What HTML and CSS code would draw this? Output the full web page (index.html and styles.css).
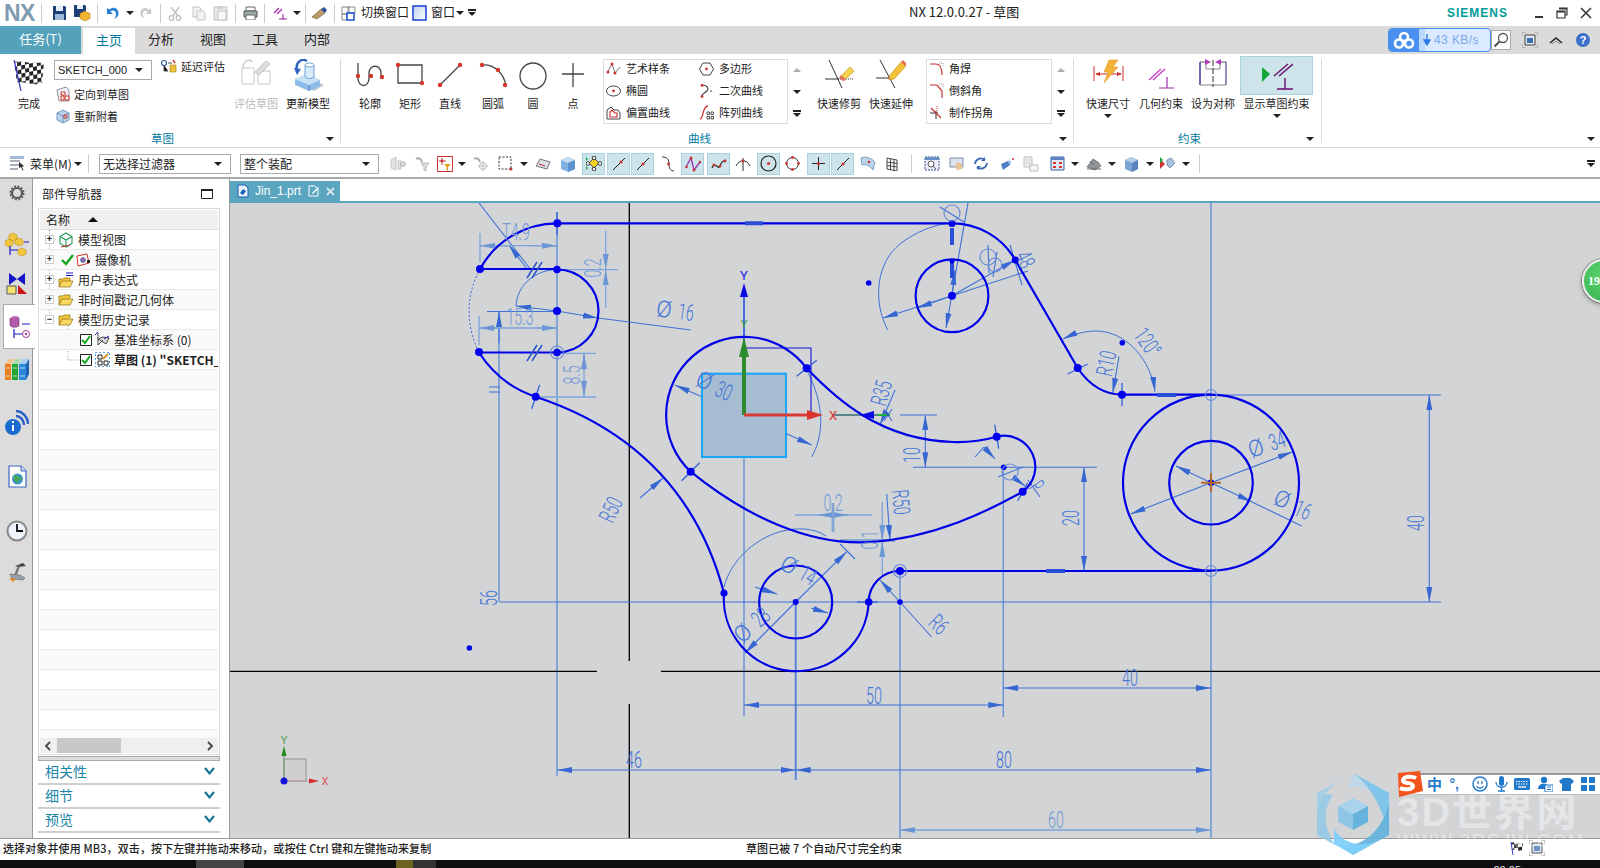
FILE: index.html
```html
<!DOCTYPE html>
<html lang="zh">
<head>
<meta charset="utf-8">
<title>NX 12.0.0.27 - 草图</title>
<link rel="stylesheet" href="styles.css">
</head>
<body>
<header class="titlebar">
  <div class="qat">
    <span class="nx">NX</span><i class="sep"></i>
    <svg width="15" height="16" viewBox="0 0 15 16"><path d="M1 1h12l1 1v13H1z" fill="#1d3f78"/><path d="M4 1h7v5H4z" fill="#e8eef6"/><path d="M3 9h9v6H3z" fill="#9db7d8"/></svg>
    <svg width="17" height="16" viewBox="0 0 17 16"><path d="M0 0h11l1 1v11H0z" fill="#1d3f78"/><path d="M3 0h6v4H3z" fill="#e8eef6"/><path d="M11 6l5 2.500v5L11 16l-5-2.500v-5z" fill="#f2b632" stroke="#b77d12" stroke-width=".6"/></svg>
    <i class="sep"></i>
    <svg width="14" height="14" viewBox="0 0 14 14"><path d="M2 2v6h6L5.500 5.500C8 3.500 11.500 5 11 9c-.2 1.500-1 3-2 4 3-1 5-3.500 4.500-6.500C13 2 8 0 4.500 3.500z" fill="#2a7fd5"/></svg>
    <i class="caret"></i>
    <svg width="13" height="14" viewBox="0 0 14 14"><path d="M12 2v6H6l2.500-2.500C6 3.500 2.500 5 3 9c.2 1.500 1 3 2 4-3-1-5-3.500-4.500-6.500C1 2 6 0 9.500 3.500z" fill="#c9c9c9"/></svg>
    <i class="sep"></i>
    <svg width="14" height="15" viewBox="0 0 14 15"><path d="M11 1L5 10M3 1l7 9" stroke="#c4c4c4" stroke-width="1.500" fill="none"/><circle cx="3.500" cy="12" r="2.300" fill="none" stroke="#bdbdbd" stroke-width="1.200"/><circle cx="10.500" cy="12" r="2.300" fill="none" stroke="#bdbdbd" stroke-width="1.200"/></svg>
    <svg width="14" height="15" viewBox="0 0 14 15"><path d="M1 1h6l2 2v8H1z" fill="#f2f2f2" stroke="#c4c4c4"/><path d="M5 5h6l2 2v7H5z" fill="#f2f2f2" stroke="#c4c4c4"/></svg>
    <svg width="15" height="16" viewBox="0 0 15 16"><path d="M1 2h13v13H1z" fill="#e6e6e6" stroke="#c4c4c4"/><path d="M5 1h5v3H5z" fill="#ccc"/><path d="M5 6h8v9H5z" fill="#f7f7f7" stroke="#c4c4c4"/></svg>
    <i class="sep"></i>
    <svg width="15" height="14" viewBox="0 0 15 14"><path d="M3 1h9v4H3z" fill="#fff" stroke="#666"/><path d="M1 5h13v6H1z" fill="#9aa" stroke="#555"/><path d="M3 9h9v5H3z" fill="#fff" stroke="#666"/></svg>
    <i class="sep"></i>
    <svg width="14" height="14" viewBox="0 0 14 14"><path d="M1 7l5-5M4 8l5-5" stroke="#b025b5" stroke-width="1.200"/><path d="M6 13h8M10 13V8" stroke="#8c1d94"/></svg>
    <i class="caret"></i>
    <i class="sep"></i>
    <svg width="16" height="14" viewBox="0 0 16 14"><path d="M0 11l9-8 4 4-8 6z" fill="#b99a66" stroke="#6b5630" stroke-width=".6"/><path d="M9 3l3-2 3 3-2 3z" fill="#2a4f9a"/></svg>
    <i class="sep"></i>
    <svg width="15" height="15" viewBox="0 0 15 15"><path d="M1 1h7v7H1zM7 1h7v6H7zM1 8h5v6H1z" fill="#fff" stroke="#888"/><path d="M6 7h7v7H6z" fill="#fff" stroke="#1a4fd0" stroke-width="1.500"/></svg>
    <span class="qat-text">切换窗口</span>
    <svg width="15" height="16" viewBox="0 0 15 16"><defs><linearGradient id="winfill" x1="0" y1="0" x2="1" y2="1"><stop offset="0" stop-color="#bcd3ea"/><stop offset="1" stop-color="#fff"/></linearGradient></defs><path d="M1 1h13v14H1z" fill="url(#winfill)" stroke="#1a3fd8" stroke-width="1.500"/></svg>
    <span class="qat-text">窗口</span>
    <i class="caret"></i>
    <i class="caret caret-bar"></i>
  </div>
  <div class="app-title">NX 12.0.0.27 - 草图</div>
  <div class="siemens">SIEMENS</div>
  <div class="winbtns">
    <svg width="12" height="12" viewBox="0 0 12 12"><path d="M3 10h8" stroke="#333" stroke-width="2"/></svg>
    <svg width="12" height="12" viewBox="0 0 12 12"><path d="M3 1h8v7H9M1 4h8v7H1z" fill="none" stroke="#333" stroke-width="1.200"/><path d="M3 1h8v1.500H3zM1 4h8v1.500H1z" fill="#333"/></svg>
    <svg width="12" height="12" viewBox="0 0 12 12"><path d="M1 1l10 10M11 1L1 11" stroke="#333" stroke-width="1.500"/></svg>
  </div>
</header>

<nav class="tabs">
  <div class="tab-task">任务(T)</div>
  <div class="tab tab-active">主页</div>
  <div class="tab tab-first">分析</div>
  <div class="tab">视图</div>
  <div class="tab">工具</div>
  <div class="tab">内部</div>
  <div class="tabs-right">
    <div class="speed">
      <span class="speed-logo"><svg width="22" height="18" viewBox="0 0 22 18"><circle cx="11" cy="6" r="4" fill="none" stroke="#fff" stroke-width="2.600"/><circle cx="6" cy="12.500" r="4" fill="none" stroke="#fff" stroke-width="2.600"/><circle cx="16" cy="12.500" r="4" fill="none" stroke="#fff" stroke-width="2.600"/></svg></span>
      <span class="speed-text"><svg width="8" height="12" viewBox="0 0 8 12"><path d="M4 0v9M1 6l3 5 3-5z" fill="#2a7be8" stroke="#2a7be8" stroke-width="1.400"/></svg>43 KB/s</span>
    </div>
    <div class="search-btn"><svg width="16" height="16" viewBox="0 0 16 16"><circle cx="10" cy="6" r="4.500" fill="#fff" stroke="#555" stroke-width="1.300"/><path d="M6.500 9.500L1.500 14.500" stroke="#555" stroke-width="2.200"/></svg></div>
    <svg class="tr-win" width="16" height="16" viewBox="0 0 16 16"><path d="M0 4V0h4M12 0h4v4M16 12v4h-4M4 16H0v-4" fill="none" stroke="#999"/><path d="M3 3h10v10H3z" fill="#dfe8f2" stroke="#444"/><path d="M5 6h6v5H5z" fill="#3d6fb0"/></svg>
    <svg class="tr-chev" width="14" height="9" viewBox="0 0 14 9"><path d="M1 7l6-5 6 5" fill="none" stroke="#222" stroke-width="1.500"/><path d="M3 8l4-3 4 3" fill="none" stroke="#888"/></svg>
    <span class="help">?</span>
  </div>
</nav>

<section class="ribbon">
  <div class="group group-sketch">
    <div class="group-body">
      <div class="tool tool-finish">
        <div class="tool-icon">
          <svg width="32" height="32" viewBox="0 0 32 32"><defs><pattern id="chk" width="8" height="8" patternUnits="userSpaceOnUse" patternTransform="rotate(-12) skewX(-10)"><rect width="8" height="8" fill="#fff"/><rect width="4" height="4" fill="#222"/><rect x="4" y="4" width="4" height="4" fill="#222"/></pattern></defs><path d="M1 3c8-3 13 3 30 0l-2 21c-10 4-19-3-25 0z" fill="url(#chk)"/><path d="M1 1l7 31" stroke="#3a3ac8" stroke-width="1.200"/></svg>
        </div>
        <span class="tool-label">完成</span>
      </div>
      <div class="sketch-stack">
        <div class="sketch-top">
          <div class="combo combo-sketch"><span>SKETCH_000</span><i class="caret"></i></div>
          <div class="mini-row">
            <svg width="16" height="14" viewBox="0 0 16 14"><circle cx="3" cy="4" r="2.500" fill="none" stroke="#2b5aa0" stroke-width="1.200"/><path d="M3 6v6h4M7 4h4" stroke="#555"/><path d="M9 6h6v7H9z" fill="#f0c040" stroke="#a57c10" stroke-width=".6"/><path d="M12 1l2 3" stroke="#c33" stroke-width="1.400"/></svg>
            <span>延迟评估</span>
          </div>
        </div>
        <div class="mini-row mini-orient">
          <svg width="16" height="16" viewBox="0 0 16 16"><path d="M2 4l9-3 3 3v11H4z" fill="#eef" stroke="#777" stroke-width=".8"/><path d="M6 6h4v3H6zM6 10h3v4H6zM10 10h4v4h-4z" fill="#fff" stroke="#c32" stroke-width="1"/></svg>
          <span>定向到草图</span>
        </div>
        <div class="mini-row mini-reattach">
          <svg width="16" height="16" viewBox="0 0 16 16"><path d="M8 2l6 3v7l-6 3-6-3V5z" fill="#bcd3ea" stroke="#5e83b8" stroke-width=".8"/><path d="M2 5l6 3 6-3M8 8v7" stroke="#5e83b8" fill="none" stroke-width=".8"/><path d="M9 7h3v3H9z" fill="none" stroke="#c32"/></svg>
          <span>重新附着</span>
        </div>
      </div>
      <div class="tool tool-eval">
        <div class="tool-icon">
          <svg width="31" height="26" viewBox="0 0 31 26"><path d="M1 9h12v16H1zM17 12h12v13H17z" fill="none" stroke="#c8c8c8"/><path d="M2 9c0-5 3-8 7-8l2 2" fill="none" stroke="#c8c8c8" stroke-width="1.500"/><path d="M14 13L25 2l4 3-11 11z" fill="#ddd" stroke="#c4c4c4"/></svg>
        </div>
        <span class="tool-label label-off">评估草图</span>
      </div>
      <div class="tool tool-eval tool-update">
        <div class="tool-icon">
          <svg width="31" height="32" viewBox="0 0 31 32"><path d="M10 24l8-4 13 6-10 6z" fill="#b9c6d4"/><path d="M2 20l12-5 13 6v6l-11 5-14-6z" fill="#8cbbea"/><path d="M2 20l14 6 11-5-13-6z" fill="#c9e2f8"/><path d="M16 26v6" stroke="#4f86c4"/><path d="M12 6h9v12c-2 2-7 2-9 0z" fill="#d8ebfa" stroke="#6da1d6"/><ellipse cx="16.500" cy="6" rx="4.500" ry="2" fill="#fff" stroke="#6da1d6"/><path d="M4 11C2 3 9-1 14 2" fill="none" stroke="#2c66c5" stroke-width="2.400"/><path d="M1 9l3 7 4-6z" fill="#2c66c5"/></svg>
        </div>
        <span class="tool-label">更新模型</span>
      </div>
    </div>
    <div class="group-foot foot-sketch"><span>草图</span><i class="caret"></i></div>
  </div>

  <div class="group group-curve">
    <div class="group-body">
      <div class="tool tool-40">
        <div class="tool-icon"><svg width="30" height="26" viewBox="0 0 30 26" class="line-ico"><path d="M3 1v15c0 10 11 10 11 0V11c0-9 12-9 12 0v6"/><circle cx="3" cy="14" r="2.200"/><circle cx="16" cy="14" r="2.200"/><circle cx="27" cy="15" r="2.200"/></svg></div>
        <span class="tool-label">轮廓</span>
      </div>
      <div class="tool tool-40">
        <div class="tool-icon"><svg width="30" height="24" viewBox="0 0 30 24" class="line-ico"><path d="M3 3h24v18H3z"/><circle cx="3" cy="3" r="2.200"/><circle cx="27" cy="21" r="2.200"/></svg></div>
        <span class="tool-label">矩形</span>
      </div>
      <div class="tool tool-40">
        <div class="tool-icon"><svg width="26" height="26" viewBox="0 0 26 26" class="line-ico"><path d="M3 23L23 3"/><circle cx="3" cy="23" r="2.200"/><circle cx="23" cy="3" r="2.200"/></svg></div>
        <span class="tool-label">直线</span>
      </div>
      <div class="tool tool-40 tool-arc">
        <div class="tool-icon"><svg width="29" height="26" viewBox="0 0 29 26" class="line-ico"><path d="M3 3c12-1 22 8 24 21"/><circle cx="3" cy="3" r="2.200"/><circle cx="19" cy="8" r="2.200"/><circle cx="26" cy="23" r="2.200"/></svg></div>
        <span class="tool-label">圆弧</span>
      </div>
      <div class="tool tool-40">
        <div class="tool-icon"><svg width="28" height="28" viewBox="0 0 28 28" class="line-ico"><circle class="hollow" cx="14" cy="14" r="13"/></svg></div>
        <span class="tool-label">圆</span>
      </div>
      <div class="tool tool-40">
        <div class="tool-icon"><svg width="24" height="26" viewBox="0 0 24 26" class="line-ico"><path d="M12 1v24M1 12h22"/></svg></div>
        <span class="tool-label">点</span>
      </div>
      <div class="gallery gallery-curve">
        <div class="g-item"><svg width="15" height="14" viewBox="0 0 15 14"><path d="M1 11L6 2l3 9 5-6" fill="none" stroke="#777"/><circle cx="6" cy="2" r="1.500" fill="#c33"/><circle cx="9" cy="11" r="1.500" fill="#c33"/><circle cx="2" cy="10" r="1.500" fill="#c33"/></svg><span>艺术样条</span></div>
        <div class="g-item"><svg width="15" height="14" viewBox="0 0 15 14"><path d="M4 1h7l3.500 6-3.500 6H4L.5 7z" fill="none" stroke="#444"/><circle cx="7.500" cy="7" r="1.400" fill="#c33"/></svg><span>多边形</span></div>
        <div class="g-item"><svg width="15" height="12" viewBox="0 0 15 12"><ellipse cx="7.500" cy="6" rx="7" ry="5" fill="none" stroke="#444"/><circle cx="7.500" cy="6" r="1.400" fill="#c33"/></svg><span>椭圆</span></div>
        <div class="g-item"><svg width="15" height="14" viewBox="0 0 15 14"><path d="M3 1c6 0 7 4 5 6s-5 3-5 5" fill="none" stroke="#444" stroke-width="1.200"/><circle cx="3" cy="1.500" r="1.400" fill="#c33"/><circle cx="3" cy="12.500" r="1.400" fill="#c33"/><circle cx="12" cy="7" r="1" fill="#888"/></svg><span>二次曲线</span></div>
        <div class="g-item"><svg width="15" height="14" viewBox="0 0 15 14"><path d="M1 13V4l4-3 3 3h4l2 3v6z" fill="none" stroke="#444"/><path d="M4 11V6l2-2 3 3h2v4z" fill="none" stroke="#c33" stroke-width="1.200"/></svg><span>偏置曲线</span></div>
        <div class="g-item"><svg width="15" height="15" viewBox="0 0 15 15"><path d="M1 14c4 0 2-13 8-13" fill="none" stroke="#c33" stroke-width="1.300"/><path d="M8 7h2.500v2.500H8zM12 7h2.500v2.500H12zM8 11.500h2.500V14H8zM12 11.500h2.500V14H12z" fill="none" stroke="#555"/></svg><span>阵列曲线</span></div>
      </div>
      <div class="g-arrows"><i class="caret caret-up"></i><i class="caret"></i><i class="caret caret-bar"></i></div>
      <div class="tool tool-52 tool-trim">
        <div class="tool-icon"><svg width="30" height="30" viewBox="0 0 30 30"><path d="M5 1l13 28M1 20h14" stroke="#333" fill="none"/><path d="M14 20h16" stroke="#333" stroke-dasharray="1 1" fill="none"/><path d="M17 17L26 8l4 4-8 8z" fill="#f4d24c" stroke="#b88a1c" stroke-width=".6"/><path d="M15 19l2-3 5 5-3 1z" fill="#e2705a"/></svg></div>
        <span class="tool-label">快速修剪</span>
      </div>
      <div class="tool tool-52">
        <div class="tool-icon"><svg width="30" height="30" viewBox="0 0 30 30"><path d="M4 1l15 28" stroke="#333" fill="none"/><path d="M0 19h14" stroke="#333" fill="none"/><path d="M12 19h5" stroke="#c33" stroke-width="1.200"/><path d="M14 16L25 3l5 4-12 13-5 1z" fill="#f4c236" stroke="#b88a1c" stroke-width=".6"/><path d="M25 3l2-2 4 4-2 2z" fill="#e2705a"/></svg></div>
        <span class="tool-label">快速延伸</span>
      </div>
      <div class="gallery gallery-corner">
        <div class="g-item"><svg width="15" height="14" viewBox="0 0 15 14"><path d="M1 2h6c4 0 6 3 6 11" fill="none" stroke="#c33" stroke-width="1.200"/><path d="M10 1h4v4" fill="none" stroke="#999" stroke-dasharray="1 1"/></svg><span>角焊</span></div>
        <div class="g-item"><svg width="15" height="16" viewBox="0 0 15 16"><path d="M1 2h7l5 6v7" fill="none" stroke="#c33" stroke-width="1.200"/><path d="M10 1h4v4" fill="none" stroke="#999" stroke-dasharray="1 1"/></svg><span>倒斜角</span></div>
        <div class="g-item"><svg width="15" height="15" viewBox="0 0 15 15"><path d="M1 8h8M7 14V6" stroke="#333" fill="none"/><path d="M2 3l10 10" stroke="#c33" stroke-width="1.200"/><path d="M8 1v6" stroke="#c33" stroke-dasharray="1 1"/></svg><span>制作拐角</span></div>
      </div>
      <div class="g-arrows"><i class="caret caret-up"></i><i class="caret"></i><i class="caret caret-bar"></i></div>
    </div>
    <div class="group-foot foot-curve"><span>曲线</span><i class="caret"></i></div>
  </div>

  <div class="group group-constraint">
    <div class="group-body">
      <div class="tool tool-50">
        <div class="tool-icon"><svg width="31" height="24" viewBox="0 0 31 24"><path d="M1 7v15M30 7v15M3 15h25" stroke="#c8322b" fill="none"/><path d="M2 15l5-2v4zM29 15l-5-2v4z" fill="#c8322b"/><path d="M16 1h9l-5 7h5L11 24l4-11h-4z" fill="#f3b137" stroke="#e28a1a" stroke-width=".5"/></svg></div>
        <span class="tool-label">快速尺寸</span>
        <i class="caret"></i>
      </div>
      <div class="tool tool-50 tool-geo">
        <div class="tool-icon icon-end"><svg width="27" height="21" viewBox="0 0 27 21"><path d="M1 12L13 1M5 12l12-11" stroke="#c23fc8" stroke-width="1.300" fill="none"/><path d="M11 20h15M19 20V9" stroke="#a52fb0" stroke-width="1.200" fill="none"/></svg></div>
        <span class="tool-label">几何约束</span>
      </div>
      <div class="tool tool-50 tool-geo2">
        <div class="tool-icon"><svg width="28" height="28" viewBox="0 0 28 28"><path d="M1 3v23" stroke="#3a3a9a" stroke-width="1.500" fill="none"/><path d="M27 3v23" stroke="#6a6aa8" stroke-width="1.500" fill="none"/><path d="M1 26h26" stroke="#888" fill="none"/><path d="M1 3h6M27 3h-6" stroke="#555" fill="none"/><path d="M7 3v7h14V3" stroke="#888" fill="none"/><path d="M14 1v27" stroke="#333" stroke-dasharray="6 2" fill="none"/><path d="M12 3L6 0v6zM16 3l6-3v6z" fill="#b33bbf"/></svg></div>
        <span class="tool-label">设为对称</span>
      </div>
      <div class="tool tool-show">
        <div class="tool-icon icon-on"><svg width="32" height="30" viewBox="0 0 32 30"><path d="M2 8l8 7-8 8z" fill="#10a83a" transform="translate(-1 -1)"/><path d="M13 16L27 4M18 16L32 4" stroke="#6b0d6e" stroke-width="1.400" fill="none"/><path d="M16 29h16M24 29V18" stroke="#6b0d6e" stroke-width="1.400" fill="none"/></svg></div>
        <span class="tool-label">显示草图约束</span>
        <i class="caret"></i>
      </div>
    </div>
    <div class="group-foot foot-constraint"><span>约束</span><i class="caret"></i></div>
  </div>

  <div class="group group-rest">
    <div class="group-body"></div>
    <div class="group-foot foot-rest"><i class="caret"></i></div>
  </div>
</section>

<section class="selbar">
  <svg class="menu-ico" width="16" height="15" viewBox="0 0 16 15"><path d="M0 1h13M0 5h10M0 9h10M0 13h8" stroke="#567" fill="none"/><path d="M0 0h14v3H0z" fill="#a4bbd6"/><path d="M9 6l5 4-2 1 1.500 3-1 .5L11 11l-2 1z" fill="#333"/></svg>
  <span class="menu-text">菜单(M)</span>
  <i class="caret menu-caret"></i>
  <i class="sep sel-sep"></i>
  <div class="combo combo-filter"><span>无选择过滤器</span><i class="caret"></i></div>
  <div class="combo combo-scope"><span>整个装配</span><i class="caret"></i></div>
  <div class="sel-icons">
    <svg width="16" height="16" viewBox="0 0 16 16"><path d="M1 4l5-3v13l-5-2zM8 5h3v8H8z" fill="#e2e2e2" stroke="#c4c4c4"/><circle cx="13" cy="8" r="2.500" fill="#ddd" stroke="#bbb"/></svg>
    <svg width="15" height="16" viewBox="0 0 15 16"><path d="M1 3c3-2 5 0 6 3" fill="none" stroke="#aaa" stroke-width="2"/><path d="M6 7h8l-3 4v4l-2-1v-3z" fill="#ddd" stroke="#bbb"/></svg>
    <svg width="16" height="16" viewBox="0 0 16 16"><path d="M.5.500h15v15H.5z" fill="#fff" stroke="#c33"/><path d="M5 2v7M2 5h7" stroke="#c33"/><circle cx="5" cy="5" r="1.400" fill="#c33"/><path d="M7 8h7l-3 3v4l-1.500-1v-3z" fill="#e8a020"/></svg>
    <i class="caret"></i>
    <svg width="15" height="16" viewBox="0 0 15 16"><path d="M1 3c3-2 5 0 6 3" fill="none" stroke="#aaa" stroke-width="2"/><circle cx="10" cy="10" r="3.500" fill="none" stroke="#bbb"/><path d="M10 5v10M5 10h10" stroke="#bbb"/></svg>
    <svg width="15" height="15" viewBox="0 0 15 15"><path d="M1 1h12v12H1z" fill="none" stroke="#333" stroke-dasharray="2 1.500"/><circle cx="13" cy="13" r="1.500" fill="#c33"/></svg>
    <i class="caret"></i>
    <svg width="16" height="14" viewBox="0 0 16 14"><path d="M1 9l4-7 10 3-3 7z" fill="#d9dfe6" stroke="#777"/><path d="M4 7l6 2" stroke="#c33"/></svg>
    <svg width="16" height="16" viewBox="0 0 16 16"><path d="M1 4l7-3 7 3v9l-7 3-7-3z" fill="#7fb2e3"/><path d="M1 4l7 3 7-3-7-3z" fill="#c6dcf2"/><path d="M8 7v9l7-3V4z" fill="#5b93cf"/></svg>
    <b class="hl"><svg width="16" height="15" viewBox="0 0 16 15"><path d="M8 2l5 5-5 5-5-5z" fill="#f5d020" stroke="#555"/><circle cx="8" cy="2" r="1.800" fill="#fff" stroke="#333"/><circle cx="8" cy="13" r="1.800" fill="#fff" stroke="#333"/><circle cx="2" cy="7.500" r="1.800" fill="#fff" stroke="#333"/><circle cx="14" cy="7.500" r="1.800" fill="#fff" stroke="#333"/><path d="M0 1l2 2-2 2zM0 10l2 2-2 2z" fill="#10a83a"/></svg></b>
    <b class="hl"><svg width="14" height="14" viewBox="0 0 14 14"><path d="M1 13L13 1" stroke="#222"/><circle cx="9" cy="5" r="1.600" fill="#c33"/></svg></b>
    <b class="hl"><svg width="14" height="14" viewBox="0 0 14 14"><path d="M1 13L13 1" stroke="#222"/><circle cx="7" cy="7" r="1.600" fill="#c33"/></svg></b>
    <svg width="14" height="16" viewBox="0 0 14 16"><path d="M1 1c5 0 7 2 7 7s2 7 5 7" fill="none" stroke="#333"/><circle cx="7.500" cy="8" r="1.400" fill="#c33"/></svg>
    <b class="hl"><svg width="16" height="16" viewBox="0 0 16 16"><path d="M1 11L6 2l3 12 6-8" fill="none" stroke="#a02cb0" stroke-width="1.300"/><circle cx="6" cy="2" r="1.500" fill="#c33"/><circle cx="9" cy="14" r="1.500" fill="#c33"/><circle cx="15" cy="6" r="1.300" fill="#c33"/><circle cx="1.500" cy="11" r="1.300" fill="#c33"/></svg></b>
    <b class="hl"><svg width="16" height="12" viewBox="0 0 16 12"><path d="M1 10c3-8 6 3 8-2s3-5 6-6" fill="none" stroke="#222" stroke-width="1.200"/><circle cx="3" cy="7" r="1.500" fill="#c33"/><circle cx="9" cy="8" r="1.500" fill="#c33"/><circle cx="14" cy="3" r="1.500" fill="#c33"/></svg></b>
    <svg width="16" height="15" viewBox="0 0 16 15"><path d="M1 10c3-7 11-7 14 0M8 2v13" fill="none" stroke="#333"/><circle cx="8" cy="5" r="1.400" fill="#c33"/></svg>
    <b class="hl"><svg width="17" height="17" viewBox="0 0 17 17"><circle cx="8.500" cy="8.500" r="7.500" fill="none" stroke="#222" stroke-width="1.200"/><circle cx="8.500" cy="8.500" r="1.600" fill="#c33"/></svg></b>
    <svg width="15" height="15" viewBox="0 0 15 15"><circle cx="7.500" cy="7.500" r="6" fill="none" stroke="#333"/><circle cx="7.500" cy="1.500" r="1.400" fill="#c33"/><circle cx="1.500" cy="7.500" r="1.400" fill="#c33"/><circle cx="13.500" cy="7.500" r="1.400" fill="#c33"/><circle cx="7.500" cy="13.500" r="1.400" fill="#c33"/></svg>
    <b class="hl"><svg width="15" height="15" viewBox="0 0 15 15"><path d="M7.500 1v13M1 7.500h13" stroke="#222"/><circle cx="7.500" cy="7.500" r="1.600" fill="#c33"/></svg></b>
    <b class="hl"><svg width="14" height="14" viewBox="0 0 14 14"><path d="M1 13L13 1" stroke="#222"/><circle cx="7" cy="7" r="1.600" fill="#c33"/></svg></b>
    <svg width="16" height="16" viewBox="0 0 16 16"><path d="M1 2c5-2 10 0 14 4l-2 8C9 9 5 8 2 9z" fill="#bcd3ea" stroke="#7d9fc4"/><circle cx="9" cy="6" r="1.300" fill="#c33"/></svg>
    <svg width="12" height="14" viewBox="0 0 12 14"><path d="M1 1l10 2v11L1 12zM4.500 2v11M8 2.500v11M1 5l10 1.500M1 8.500l10 1.500" fill="none" stroke="#333" stroke-width=".9"/></svg>
    <i class="sep"></i>
    <svg width="16" height="15" viewBox="0 0 16 15"><path d="M1 1h14v13H1z" fill="#eef" stroke="#334e8a" stroke-dasharray="2 1"/><path d="M1 1h14v3H1z" fill="#6a8ec6"/><circle cx="7" cy="8" r="3" fill="#fff" stroke="#555"/><path d="M9 10l3 3" stroke="#555"/></svg>
    <svg width="15" height="14" viewBox="0 0 15 14"><path d="M1 1h13v9H1z" fill="#dbe4ef" stroke="#7d8fa8"/><path d="M8 5l5 2v5l-5 1-2-4z" fill="#e8c49a"/></svg>
    <svg width="16" height="15" viewBox="0 0 16 15"><path d="M2 8a6 6 0 0 1 10-4M14 7a6 6 0 0 1-10 4" fill="none" stroke="#3a68b4" stroke-width="1.800"/><path d="M12 1v4H8zM4 14v-4h4z" fill="#3a68b4"/></svg>
    <svg width="15" height="14" viewBox="0 0 15 14"><path d="M1 7l7-3 2 4-7 5z" fill="#4f7fc6"/><path d="M8 4l2 4 1-1-1-4z" fill="#9cbde6"/><circle cx="13" cy="2" r="1" fill="#c33"/></svg>
    <svg width="16" height="16" viewBox="0 0 16 16"><path d="M1 1h8v10H1z" fill="#eee" stroke="#bbb"/><path d="M7 9h8v6H7z" fill="#f5f5f5" stroke="#bbb"/><path d="M3 4h1M5 4h2M3 7h1M5 7h2" stroke="#bbb"/></svg>
    <svg width="15" height="15" viewBox="0 0 15 15"><path d="M1 1h13v13H1z" fill="#dfe8f4" stroke="#3a5ea6"/><path d="M1 1h13v3H1z" fill="#5e82c2"/><path d="M3 6h3v2H3zM9 6h3v2H9zM3 10h3v2H3zM9 10h3v2H9z" fill="#d33"/></svg>
    <i class="caret"></i>
    <svg width="16" height="14" viewBox="0 0 16 14"><path d="M1 10l6-8 5 3 3 4-6 4z" fill="#8f9398" stroke="#555" stroke-width=".6"/><path d="M4 4l4 4M1 12h14" stroke="#666"/></svg>
    <i class="caret"></i>
    <svg width="15" height="16" viewBox="0 0 15 16"><path d="M1 4l6-3 7 3v9l-6 3-7-3z" fill="#7ea4d4"/><path d="M1 4l7 3 6-3-7-3z" fill="#b4cde9"/><path d="M8 7v9l6-3V4z" fill="#5a84be"/></svg>
    <i class="caret"></i>
    <svg width="16" height="16" viewBox="0 0 16 16"><path d="M8 4l4-2 4 5-5 5-3-3z" fill="#a9c2e0" stroke="#7a90ad"/><path d="M1 3l5 5-5 5z" fill="#c33"/><path d="M1 1l3 3-3 3z" fill="#10a83a"/></svg>
    <i class="caret"></i>
    <i class="sep"></i>
  </div>
  <i class="caret caret-bar sel-end"></i>
</section>

<main class="main">
  <aside class="strip">
    <svg width="16" height="16" viewBox="0 0 16 16"><circle cx="8" cy="8" r="5" fill="none" stroke="#555" stroke-width="2.200"/><circle cx="8" cy="8" r="6.800" fill="none" stroke="#555" stroke-width="1.400" stroke-dasharray="2 1.600"/></svg>
    <svg width="24" height="24" viewBox="0 0 24 24"><path d="M8 1l4 2v4l-4 2-4-2V3zM14 6l4 2v4l-4 2-4-2V8zM4 7l4 2v4l-4 2-4-2V9z" fill="#f2c63e" stroke="#c39514" stroke-width=".6"/><path d="M17 16l4 2v4l-4 2-4-2v-4z" fill="#f2c63e" stroke="#c39514" stroke-width=".6"/><path d="M5 14v9M5 18h8M19 10h5" stroke="#1a1ac0" stroke-width="1.200"/></svg>
    <svg width="22" height="22" viewBox="0 0 22 22"><path d="M3 0l8 6-8 6zM19 0l-8 6 8 6z" fill="#1414c8"/><path d="M1 13h9v8H1z" fill="#f4e36a" stroke="#555"/><path d="M12 21V12l9 9z" fill="#c81414"/></svg>
    <div class="strip-active"><svg width="22" height="24" viewBox="0 0 22 24"><ellipse cx="6" cy="3" rx="4" ry="2" fill="#c06ab8"/><path d="M1 3v7c0 3 9 3 9 0V3" fill="#b05aa8" stroke="#6b2c68" stroke-width=".6"/><path d="M13 9h8M5 14v9M5 19h9" stroke="#1a1ac0" stroke-width="1.200"/><circle cx="17" cy="19" r="3.500" fill="#fff" stroke="#a03c98"/><circle cx="17" cy="19" r="1.200" fill="#a03c98"/></svg></div>
    <svg class="strip-lib" width="24" height="22" viewBox="0 0 24 22"><path d="M0 6h6v16H0z" fill="#e8801f"/><path d="M0 6l4-5h5L6 6z" fill="#f3c38a"/><path d="M7 6h6v16H7z" fill="#22a332"/><path d="M7 6l4-5h5l-3 5z" fill="#a4dba8"/><path d="M14 6h7v16h-7z" fill="#2a88dc"/><path d="M14 6l4-5h6l-3 5z" fill="#a6cff2"/><path d="M21 6l3-5v15l-3 6z" fill="#1a64b0"/><path d="M1 10h4M8 10h4M15 10h5M1 18h4M8 18h4M15 18h5" stroke="#fff" stroke-opacity=".7"/></svg>
    <svg width="24" height="25" viewBox="0 0 24 25"><path d="M11 1c6 0 12 6 12 13M11 6c4 0 8 4 8 9" fill="none" stroke="#2a5fc8" stroke-width="2.400"/><circle cx="8" cy="17" r="8" fill="#1a6ad0"/><path d="M7 11h2v2H7zM7 15h2v6H7z" fill="#fff"/></svg>
    <svg width="19" height="23" viewBox="0 0 19 23"><path d="M1 1h12l5 5v16H1z" fill="#fff" stroke="#3c65c0" stroke-width="1.200"/><path d="M13 1v5h5" fill="#cfe0f6" stroke="#3c65c0"/><circle cx="9.500" cy="14" r="5.500" fill="#3f97c9"/><path d="M6 11c2-2 5 0 5 2s-2 3-1 5c-3 0-5-4-4-7zM12 11l2 2-1 3-2-1z" fill="#4aa65a"/></svg>
    <svg width="22" height="22" viewBox="0 0 22 22"><circle cx="11" cy="11" r="10.500" fill="#888"/><circle cx="11" cy="11" r="8.500" fill="#eef4fb"/><path d="M11 4v7h6" stroke="#111" stroke-width="1.800" fill="none"/></svg>
    <svg width="19" height="21" viewBox="0 0 19 21"><path d="M7 4l8-3 3 3-8 1z" fill="#444"/><path d="M11 4L7 14" stroke="#777" stroke-width="2.400"/><path d="M2 12l10 1 5 3-2 2-11-1z" fill="#9aa0ae" stroke="#555" stroke-width=".5"/><path d="M1 16l7 1-3 3z" fill="#e88a1c"/></svg>
  </aside>

  <aside class="nav">
    <div class="nav-head"><span>部件导航器</span><svg width="12" height="10" viewBox="0 0 12 10"><path d="M.5.500h11v9H.5z" fill="#fff" stroke="#222"/><path d="M0 0h12v2H0z" fill="#222"/></svg></div>
    <div class="tree">
      <div class="tree-head"><span>名称</span><i class="caret caret-up dark"></i></div>
      <div class="tree-body">
        <svg class="tree-lines" width="60" height="140" viewBox="0 0 60 140"><path d="M9.500 0V90M28 91V130M9.500 10h8M9.500 30h12M9.500 50h8M9.500 70h8M28 110h11M28 130h11" stroke="#999" stroke-dasharray="1 1.500" fill="none"/></svg>
        <div class="row"><i class="twist">+</i><svg class="ri" width="16" height="16" viewBox="0 0 16 16"><path d="M8 1l6 3.500v7L8 15l-6-3.500v-7zM2 4.500L8 8l6-3.500M8 8v7" fill="none" stroke="#1f9a55" stroke-width="1.100"/><path d="M3 15l9-2" stroke="#d33" stroke-width="1.200"/></svg><span>模型视图</span></div>
        <div class="row alt"><i class="twist">+</i><svg class="rc" width="13" height="12" viewBox="0 0 13 12"><path d="M1 6l4 4 7-9" fill="none" stroke="#12a822" stroke-width="2.400"/></svg><svg class="ri" width="15" height="14" viewBox="0 0 15 14"><path d="M1 3l10-2 2 9-11 3z" fill="#fff" stroke="#d3302a"/><circle cx="7" cy="7" r="2.500" fill="#8a6ac8" stroke="#444" stroke-width=".5"/><path d="M11 7h3v3h-3z" fill="#222"/></svg><span>摄像机</span></div>
        <div class="row"><i class="twist">+</i><svg class="ri" width="16" height="16" viewBox="0 0 16 16"><path d="M8 1h7M8 3.500h7" stroke="#1a1ac0"/><path d="M1 15V7h4l1-1h6v3" fill="#f2c63e" stroke="#8a6a10" stroke-width=".7"/><path d="M1 15l3-6h11l-3 6z" fill="#f8d860" stroke="#8a6a10" stroke-width=".7"/></svg><span>用户表达式</span></div>
        <div class="row alt"><i class="twist">+</i><svg class="ri" width="16" height="13" viewBox="0 0 16 13"><path d="M1 12V3h4l1-1h6v3" fill="#f2c63e" stroke="#8a6a10" stroke-width=".7"/><path d="M1 12l3-6h11l-3 6z" fill="#f8d860" stroke="#8a6a10" stroke-width=".7"/></svg><span>非时间戳记几何体</span></div>
        <div class="row"><i class="twist">−</i><svg class="ri" width="16" height="13" viewBox="0 0 16 13"><path d="M1 12V3h4l1-1h6v3" fill="#f2c63e" stroke="#8a6a10" stroke-width=".7"/><path d="M1 12l3-6h11l-3 6z" fill="#f8d860" stroke="#8a6a10" stroke-width=".7"/></svg><span>模型历史记录</span></div>
        <div class="row alt row-child"><svg class="cb" width="12" height="12" viewBox="0 0 12 12"><path d="M.5.500h11v11H.5z" fill="#fff" stroke="#222"/><path d="M2 6l3 3 5-7" fill="none" stroke="#12a822" stroke-width="2"/></svg><svg class="ri" width="15" height="15" viewBox="0 0 15 15"><path d="M3 1v12M3 13l5-5M3 7l8 5 3-6-6-1z" fill="#ddd" stroke="#333" stroke-width=".9"/><path d="M0 3l3-3M9 7l5-3" stroke="#1a1ac0"/></svg><span>基准坐标系 (0)</span></div>
        <div class="row row-child row-bold"><svg class="cb" width="12" height="12" viewBox="0 0 12 12"><path d="M.5.500h11v11H.5z" fill="#fff" stroke="#222"/><path d="M2 6l3 3 5-7" fill="none" stroke="#12a822" stroke-width="2"/></svg><svg class="ri" width="15" height="15" viewBox="0 0 15 15"><path d="M0 0h15v15H0z" fill="none" stroke="#1a8ae0" stroke-dasharray="2 2" stroke-width="1.500"/><path d="M3 3h4v4H3zM3 9h4v4H3zM9 9h4v4H9z" fill="none" stroke="#222"/><path d="M8 7l5-5" stroke="#d09020" stroke-width="2"/></svg><span>草图 (1) "SKETCH_</span></div>
        <div class="tree-fill"></div>
      </div>
      <div class="hscroll"><svg width="8" height="10" viewBox="0 0 8 10"><path d="M6 1L2 5l4 4" fill="none" stroke="#444" stroke-width="1.800"/></svg><i class="thumb"></i><svg width="8" height="10" viewBox="0 0 8 10"><path d="M2 1l4 4-4 4" fill="none" stroke="#444" stroke-width="1.800"/></svg></div>
    </div>
    <div class="grip"></div>
    <div class="sect"><span>相关性</span><svg width="11" height="8" viewBox="0 0 11 8"><path d="M1 1l4.500 5.500L10 1" fill="none" stroke="#0f6f8f" stroke-width="2"/></svg></div>
    <div class="sect"><span>细节</span><svg width="11" height="8" viewBox="0 0 11 8"><path d="M1 1l4.500 5.500L10 1" fill="none" stroke="#0f6f8f" stroke-width="2"/></svg></div>
    <div class="sect"><span>预览</span><svg width="11" height="8" viewBox="0 0 11 8"><path d="M1 1l4.500 5.500L10 1" fill="none" stroke="#0f6f8f" stroke-width="2"/></svg></div>
  </aside>

  <section class="view">
    <div class="doc-tabs">
      <div class="doc-tab">
        <svg width="12" height="14" viewBox="0 0 12 14"><path d="M1 1h7l3 3v9H1z" fill="#eaf2fb" stroke="#1d5fb8"/><path d="M3 9l3-4 3 2-3 4z" fill="#1d5fb8"/></svg>
        <span>Jin_1.prt</span>
        <svg width="12" height="12" viewBox="0 0 12 12"><path d="M1 1h6l3 3v7H1z" fill="none" stroke="#fff"/><path d="M4 8l6-6 1 1-6 6z" fill="#fff"/></svg>
        <svg class="doc-x" width="9" height="9" viewBox="0 0 9 9"><path d="M1 1l7 7M8 1L1 8" stroke="#d5e6ee" stroke-width="1.800"/></svg>
      </div>
    </div>
    <div class="canvas">
      <svg class="sketch" viewBox="230 203 1370 635" width="1370" height="635">
        <defs>
          <marker id="a" markerUnits="userSpaceOnUse" markerWidth="16" markerHeight="8" refX="15" refY="4" orient="auto-start-reverse"><path d="M15 4L0 1v6z" fill="#3566d2"/></marker>
          <marker id="af" markerUnits="userSpaceOnUse" markerWidth="16" markerHeight="8" refX="15" refY="4" orient="auto-start-reverse"><path d="M15 4L0 1v6z" fill="#6d96d6"/></marker>
        </defs>

        <g class="ext">
          <path d="M1211 203V838M744 415V716M557 212V776M900 571V838M499 312V602"/>
          <path class="ext-thick" d="M795.700 602V780"/>
          <path d="M1003.300 467V717"/>
        </g>
        <path class="ref-black" d="M629.300 203V661M629.300 704V838M230 671.400H597M661 671.400H1600"/>

        <g class="dimline">
          <path d="M500 602H1441M1211 395H1441"/>
          <path d="M744 705H1003.300" marker-start="url(#a)" marker-end="url(#a)"/>
          <path d="M1003.300 688H1211" marker-start="url(#a)" marker-end="url(#a)"/>
          <path d="M557 770H795.700" marker-start="url(#a)" marker-end="url(#a)"/>
          <path d="M795.700 770H1211" marker-start="url(#a)" marker-end="url(#a)"/>
          <path d="M1084 467V571" marker-start="url(#a)" marker-end="url(#a)"/>
          <path d="M925.300 415V467.300" marker-start="url(#a)" marker-end="url(#a)"/>
          <path d="M1429.300 395V602" marker-start="url(#a)" marker-end="url(#a)"/>
          <path d="M900 415H937M913 467.300H1097M1010 467.300H1096"/>
          <path d="M1130.700 514L1211 482.700" marker-start="url(#a)"/>
          <path d="M1211 482.700L1292.700 451.700" marker-end="url(#a)"/>
          <path d="M1176 466L1211 482.700" marker-start="url(#a)"/>
          <path d="M1211 482.700L1252 502" marker-end="url(#a)"/>
          <path d="M1252 502L1301.700 526"/>
          <path class="hollow" d="M1062.700 339C1076 333 1088 331 1096 331C1126 331 1151 360 1155 391.700" marker-start="url(#a)" marker-end="url(#a)"/>
          <path d="M1119 356.700L1112.700 393" marker-end="url(#a)"/>
          <path d="M883 318L952 295.700" marker-start="url(#a)"/>
          <path d="M952 295.700L1028 271"/><path d="M952 295.700L1015 260" marker-end="url(#a)"/>
          <path d="M952 295.700L917 308" marker-end="url(#a)"/>
          <path d="M968 203L946 328" marker-end="url(#a)"/>
          <path d="M952 295.700L955 270" marker-end="url(#a)"/>
          <path class="hollow" d="M887.700 330C872 300 877 262 900 244C915 232 935 224 952 223"/>
          <path d="M1010 245L1022 285"/>
          <path d="M940 207L964 222"/>
          <path d="M988 245L989 273M997 252L993 277"/>
          <path class="hollow" d="M811.700 457C824 435 825 405 806.700 370"/>
          <path d="M675 385L744 415" marker-start="url(#a)"/>
          <path d="M744 415L811.700 445" marker-end="url(#a)"/>
          <path d="M745 653L795.700 602" marker-start="url(#a)"/>
          <path d="M795.700 602L846.700 551.700" marker-end="url(#a)"/>
          <path d="M840 544L855 559"/>
          <path d="M755 587L777 594" marker-end="url(#a)"/>
          <path d="M811 608L828 613" marker-end="url(#a)"/>
          <path class="hollow" d="M724 587C730 563 752 540 780 531.700C796 527 815 528 826 536"/>
          <path d="M640 498L663 478" marker-end="url(#a)"/>
          <path d="M931.700 637L880 580" marker-end="url(#a)"/>
          <path d="M886.700 494L890 540" marker-end="url(#a)"/>
          <path d="M895 390L880 425" marker-end="url(#a)"/>
          <path d="M1013 477L1025 486" marker-end="url(#a)"/>
          <path d="M998 477L1023 467"/>
          <path d="M975 457L984 447"/>
          <path d="M984 447L995 459" marker-end="url(#a)"/>
          <path d="M1028 480L1040 497"/>
          <path d="M531 270L479 203"/>
          <path d="M527 269L509 245" marker-end="url(#a)"/>
          <path d="M516 306L557 311" marker-start="url(#a)"/>
          <path d="M557 311L598 318" marker-end="url(#a)"/>
          <path d="M598 318L690.700 330"/>
          <path class="hollow" d="M516 306C517 285 535 270 557 269.500"/>
          <path d="M487 311.500H557"/>
          <path d="M499 343V312" marker-end="url(#a)"/>
          <path d="M489 387H500M489 392H500"/>
          <path class="thin-dark" d="M744 348H811V415"/>
        </g>

        <g class="dimfade">
          <path d="M480 233V262M557 235V262M480 245.700H557"/>
          <path d="M480 245.700H510" marker-start="url(#af)"/>
          <path d="M557 245.700H530" marker-start="url(#af)"/>
          <path d="M479 316V345M479 328H557"/>
          <path d="M479 328H500" marker-start="url(#af)"/>
          <path d="M557 328H535" marker-start="url(#af)"/>
          <path d="M557 269.700H618M605.700 231V255M605.700 285V308"/>
          <path d="M605.700 255V269" marker-end="url(#af)"/>
          <path d="M605.700 285V270" marker-end="url(#af)"/>
          <path d="M557 353.300H596M536 397H596M584 353.300V397"/>
          <path d="M584 370V354" marker-end="url(#af)"/>
          <path d="M584 380V396" marker-end="url(#af)"/>
          <path d="M795 515H872M833 503V532"/>
          <path d="M833 515H818" marker-end="url(#af)"/>
          <path d="M833 515H848" marker-end="url(#af)"/>
          <path d="M882.300 502V575M840 540.500H895"/>
          <path d="M882.300 525V540" marker-end="url(#af)"/>
          <path d="M882.300 555V542" marker-end="url(#af)"/>
          <path d="M900 830H1211" marker-start="url(#af)" marker-end="url(#af)"/>
        </g>
        <path class="faded-bar" d="M840 540.500H895M833 503V532"/>

        <rect class="csys-square" x="702" y="373.700" width="84" height="83.300"/>
        <path class="axis-blue" d="M744 415V290"/>
        <path class="axis-blue-head" d="M744 283l4 14h-8z"/>
        <path class="axis-green" d="M744 415V350"/>
        <path class="axis-green-head" d="M744 337l5 20h-10z"/>
        <path class="axis-red" d="M744 415H810"/>
        <path class="axis-red-head" d="M823 415l-16-5v10z"/>
        <path class="axis-mini" d="M834 415H887"/>
        <path class="axis-blue-head" d="M860 415l14-4v8z"/>
        <path class="axis-green-mini" d="M878 415H890"/>
        <path class="x-blue" d="M884 409L892 421M892 409L884 421"/>

        <text class="axis-label lab-blue" x="744" y="280">Y</text>
        <text class="axis-label lab-green" x="744" y="328">Y</text>
        <text class="axis-label lab-red" x="833" y="420">X</text>

        <path class="curve-dotted" d="M480 269A88 88 0 0 0 479 352"/>
        <g class="curve">
          <path d="M951.700 223.300H557.300A88 88 0 0 0 480 269H557V269.500A41.500 41.500 0 1 1 557 352.500H479Q500 385 535.700 396.700C600 418 690 465 724 593A72.500 72.500 0 1 0 868.700 602A31 31 0 0 1 900 571H1211"/>
          <path d="M1211 394.700H1122Q1095 394 1077.700 368L1015.300 260A72.700 72.700 0 0 0 952 223.300"/>
          <path d="M806.700 368.300A78 78 0 1 0 690.700 471.700C745 516 810 546 870 542C935 538 990 510 1022.700 491.700A31 31 0 0 0 996.700 436.700C985 440 970 442.500 953 442C880 440 835 398 806.700 368.300"/>
          <circle cx="1211" cy="482.700" r="88"/>
          <circle cx="1211" cy="482.700" r="41.800"/>
          <circle cx="952" cy="295.700" r="36.400"/>
          <circle cx="795.700" cy="602" r="36.500"/>
        </g>
        <g class="bars">
          <path d="M745 223.300H763M1046 571H1065M1157 395H1176M952 228V245M952 278V258"/>
        </g>
        <g class="parallel">
          <path d="M527 278L537 262M532 278L542 262M527 361L537 345M532 361L542 345"/>
        </g>

        <g class="ticks">
          <path d="M806.700 368.300m-10 8l20 -16M690.700 471.700m-9 9l18 -18M535.700 396.700m-4 12l8 -24M557 212V235M1077.700 368m-10 6l20 -10M1122 383V406M996.700 436.700m-2 -12l4 24M1022.700 491.700m-5 9l10 -18"/>
          <path d="M857 602H878"/>
        </g>
        <g class="points">
          <circle cx="557.300" cy="223.300" r="4"/><circle cx="480" cy="269" r="4"/><circle cx="557" cy="269.500" r="3.800"/><circle cx="557" cy="311" r="4"/><circle cx="479" cy="352" r="4"/><circle cx="557" cy="352.500" r="3.800"/><circle cx="535.700" cy="396.700" r="4"/><circle cx="806.700" cy="368.300" r="4"/><circle cx="690.700" cy="471.700" r="4"/><circle cx="952" cy="223.500" r="3.600"/><circle cx="952" cy="295.700" r="4"/><circle cx="1015.300" cy="260" r="3.600"/><circle cx="1077.700" cy="368" r="4"/><circle cx="1122" cy="394.700" r="4"/><circle cx="996.700" cy="436.700" r="4"/><circle cx="1022.700" cy="491.700" r="4"/><circle cx="724" cy="593" r="3.600"/><circle cx="868.700" cy="602" r="3.800"/><circle cx="900" cy="571" r="4"/><circle cx="900" cy="602" r="2.800"/><circle cx="795.700" cy="602" r="3"/><circle cx="1003.700" cy="467.300" r="2.800"/><circle cx="1211" cy="482.700" r="3.200"/><circle cx="868.700" cy="283" r="2.800"/><circle cx="1122.300" cy="342.700" r="2.800"/><circle cx="469.400" cy="648" r="2.800"/><circle cx="952" cy="261" r="2.500"/>
        </g>
        <g class="rings">
          <circle cx="557" cy="352.500" r="6.500"/><circle cx="900" cy="571" r="6.500"/><circle cx="1211" cy="395" r="5.500"/><circle cx="1211" cy="571" r="5.500"/><circle cx="952" cy="213" r="8"/><circle cx="1010" cy="472" r="8"/><circle cx="988" cy="257" r="8"/><circle cx="995" cy="265" r="7"/>
        </g>
        <path class="cross-orange" d="M1201 482.700H1221M1211 473V492"/>

        <g class="dim-txt">
          <text transform="translate(874 704) scale(.62 1)">50</text>
          <text transform="translate(1130 686) scale(.62 1)">40</text>
          <text transform="translate(634 768) scale(.62 1)">46</text>
          <text transform="translate(1004 768) scale(.62 1)">80</text>
          <text transform="translate(1079 518) rotate(-90) scale(.62 1)">20</text>
          <text transform="translate(920 455) rotate(-90) scale(.62 1)">10</text>
          <text transform="translate(1424 523) rotate(-90) scale(.62 1)">40</text>
          <text transform="translate(497 598) rotate(-90) scale(.62 1)">56</text>
          <text transform="translate(1114 365) rotate(-78) scale(.62 1)">R10</text>
          <text transform="translate(889 395) rotate(-75) scale(.62 1)">R35</text>
          <text transform="translate(893 503) rotate(85) scale(.62 1)">R50</text>
          <text transform="translate(618 513) rotate(-65) scale(.62 1)">R50</text>
          <text transform="translate(933 630) rotate(45) scale(.62 1)">R6</text>
          <text transform="translate(1030 491) rotate(55) scale(.5 1)">P</text>
          <text transform="translate(1141 347) rotate(55) scale(.62 1)">120°</text>
          <text transform="translate(1279.500 448.600) rotate(-18) scale(.62 1)">34</text>
          <text transform="translate(1299.800 517.300) rotate(24) scale(.62 1)">16</text>
          <text transform="translate(685 320) rotate(8) scale(.62 1)">16</text>
          <text transform="translate(720.800 398.300) rotate(24) scale(.62 1)">30</text>
          <text transform="translate(804 582) rotate(30) scale(.62 1)">14</text>
          <text transform="translate(766 623) rotate(-42) scale(.62 1)">28</text>
          <text transform="translate(1018 263) rotate(65) scale(.62 1)">48</text>
          <text class="phi" transform="translate(1258.500 455.600) rotate(-18)">Ø</text>
          <text class="phi" transform="translate(1278.800 506.300) rotate(24)">Ø</text>
          <text class="phi" transform="translate(663 317) rotate(8)">Ø</text>
          <text class="phi" transform="translate(701 388) rotate(24)">Ø</text>
          <text class="phi" transform="translate(785 572) rotate(30)">Ø</text>
          <text class="phi" transform="translate(748 639) rotate(-42)">Ø</text>
        </g>
        <g class="dim-txt faded">
          <text transform="translate(516 240) scale(.62 1)">T4.9</text>
          <text transform="translate(520 325) scale(.62 1)">15.3</text>
          <text transform="translate(601 268) rotate(-90) scale(.62 1)">0.2</text>
          <text transform="translate(580 375) rotate(-90) scale(.62 1)">8.5</text>
          <text transform="translate(833 511) scale(.62 1)">0.2</text>
          <text transform="translate(878 540) rotate(-90) scale(.62 1)">0.1</text>
          <text transform="translate(1056 828) scale(.62 1)">60</text>
        </g>

        <g class="tiny-csys">
          <path class="tc-square" d="M284 759h22v22h-22z"/>
          <path class="tc-y" d="M284 781V750"/>
          <path class="tc-yh" d="M284 746l2.500 10h-5z"/>
          <path class="tc-x" d="M284 781H315"/>
          <path class="tc-xh" d="M319 781l-10-2.500v5z"/>
          <circle class="tc-z" cx="284" cy="781" r="3.500"/>
          <text class="tc-lab-y" x="284" y="744">Y</text>
          <text class="tc-lab-x" x="325" y="785">X</text>
        </g>
      </svg>
    </div>
  </section>
</main>

<footer class="status">
  <span class="status-l">选择对象并使用 MB3，双击，按下左键并拖动来移动，或按住 Ctrl 键和左键拖动来复制</span>
  <span class="status-c">草图已被 7 个自动尺寸完全约束</span>
  <svg class="status-flag" width="14" height="14" viewBox="0 0 14 14"><path d="M1 2c4-2 7 1 12 0l-1 7c-4 2-7-1-10 0z" fill="url(#chk)"/><path d="M1 1l2 13" stroke="#3a3ac8"/></svg>
  <svg class="status-win" width="16" height="16" viewBox="0 0 16 16"><path d="M0 4V0h4M12 0h4v4M16 12v4h-4M4 16H0v-4" fill="none" stroke="#999"/><path d="M3 3h10v10H3z" fill="#dfe8f2" stroke="#555"/><path d="M5 6h6v5H5z" fill="#6d93c6"/></svg>
</footer>
<div class="taskbar">
  <i class="tb-a"></i><i class="tb-b"></i><i class="tb-c"></i><span class="tb-time">22:25</span>
</div>

<div class="badge"><span>19</span></div>

<div class="ime">
  <svg class="ime-s" width="28" height="26" viewBox="0 0 28 26"><path d="M3 2L25 0l3 20-24 6z" fill="#f2541c"/><path d="M21 7c-4-2-12-2-13 2s10 2 10 6-9 4-13 2" fill="none" stroke="#fff" stroke-width="4"/></svg>
  <div class="ime-bar">
    <b class="ime-zh">中</b>
    <span class="ime-pt">°,</span>
    <svg width="16" height="16" viewBox="0 0 16 16"><circle cx="8" cy="8" r="7" fill="none" stroke="#1f78c8" stroke-width="1.500"/><path d="M6 5v3M10 5v3M4.500 10c2 3 5 3 7 0" stroke="#1f78c8" fill="none" stroke-width="1.300"/></svg>
    <svg width="13" height="16" viewBox="0 0 13 16"><rect x="4" y="0" width="5" height="10" rx="2.500" fill="#1f78c8"/><path d="M1 6c0 7 11 7 11 0M6.500 11v4M3 15h7" stroke="#1f78c8" fill="none" stroke-width="1.300"/></svg>
    <svg width="16" height="12" viewBox="0 0 16 12"><rect x="0" y="0" width="16" height="12" rx="1.500" fill="#1f78c8"/><path d="M2 3.500h12M2 6h12" stroke="#fff" stroke-dasharray="1.500 1"/><path d="M4 9h8" stroke="#fff" stroke-width="1.300"/></svg>
    <svg width="16" height="16" viewBox="0 0 16 16"><circle cx="7" cy="4" r="3.200" fill="#1f78c8"/><path d="M1 13c0-7 11-7 11 0z" fill="#1f78c8"/><path d="M8 9h8v7H8z" fill="#fff" stroke="#1f78c8"/><path d="M10 11h4M10 13.500h4" stroke="#1f78c8"/></svg>
    <svg width="15" height="13" viewBox="0 0 15 13"><path d="M0 3l4-3h7l4 3-2 3-1-1v8H3V5L2 6z" fill="#1f78c8"/></svg>
    <svg width="14" height="14" viewBox="0 0 14 14"><path d="M0 0h6v6H0zM8 0h6v6H8zM0 8h6v6H0zM8 8h6v6H8z" fill="#1f78c8"/></svg>
  </div>
</div>

<div class="watermark">
  <svg width="72" height="82" viewBox="0 0 72 82">
    <path d="M36 0L72 20V36C60 20 48 12 32 14z" fill="#bcd7e8" opacity=".9"/>
    <path d="M36 0l36 20v40C66 40 56 14 36 0z" fill="#74c2ea" opacity=".85"/>
    <path d="M72 30v32L36 82 22 72c24 4 44-16 50-42z" fill="#60b1dd" opacity=".9"/>
    <path d="M17 56c8 14 30 22 50 8L36 82 17 71z" fill="#7fd0fb" opacity=".95"/>
    <path d="M0 20v42l18 10C8 56 4 38 16 22z" fill="#93c9e6" opacity=".9"/>
    <path d="M0 20L36 0C22 8 6 16 0 40z" fill="#a5cfe6" opacity=".9"/>
    <path d="M36 20l19 10v21L36 62 17 51V30z" fill="#d3d4d6"/>
    <path d="M36 25l15 8-15 8-15-8z" fill="#a9d3ec"/>
    <path d="M21 33l15 8v16l-15-8z" fill="#8fc6e6"/>
    <path d="M51 33L36 41v16l15-8z" fill="#66b4de"/>
  </svg>
  <div class="wm-text"><span class="wm-big">3D世界网</span><span class="wm-small">WWW.3DSJW.COM</span></div>
</div>
</body>
</html>
```

FILE: styles.css
```css
* { box-sizing: border-box; }
html, body { margin: 0; padding: 0; }
body {
  width: 1600px; height: 868px; overflow: hidden; position: relative;
  display: flex; flex-direction: column; background: #fff; color: #222;
  font-family: "Noto Sans CJK SC", "Liberation Sans", sans-serif; font-size: 11px;
}
svg { display: block; flex: none; }
i { font-style: normal; display: block; }

.caret { width: 0; height: 0; border-left: 4px solid transparent; border-right: 4px solid transparent; border-top: 4px solid #222; flex: none; }
.caret-up { border-top: 0; border-bottom: 4px solid #aaa; }
.caret-up.dark { border-left-width: 5px; border-right-width: 5px; border-bottom: 5px solid #111; }
.caret-bar { position: relative; margin-top: 2px; }
.caret-bar::before { content: ""; display: block; position: absolute; left: -4px; top: -7px; width: 8px; height: 2px; background: #222; }
.sep { width: 1px; height: 19px; background: #ccc; }

/* title bar */
.titlebar { height: 26px; flex: none; display: flex; align-items: center; padding-left: 4px; background: #fff; }
.qat { display: grid; width: 476px; align-items: center; justify-items: start;
  grid-template-columns: 37px 11px 22px 23px 8px 21px 14px 20px 8px 24px 21px 22px 8px 21px 9px 20px 12px 7px 22px 7px 20px 51px 19px 25px 12px 8px; }
.nx { font: bold 23px/26px "Liberation Sans", sans-serif; color: #7f9bb2; letter-spacing: -.5px; }
.qat-text { font-size: 12px; line-height: 16px; white-space: nowrap; padding-bottom: 2px; }
.app-title { margin-left: 429px; width: 110px; font-size: 13px; white-space: nowrap; color: #222; padding-bottom: 4px; }
.siemens { margin-left: 428px; width: 62px; font: bold 12px "Liberation Sans", sans-serif; color: #009a9a; letter-spacing: 1px; white-space: nowrap; }
.winbtns { margin-left: 23px; display: flex; gap: 12px; }

/* tabs */
.tabs { height: 28px; flex: none; display: flex; background: #dbdbdb; font-size: 13px; position: relative; }
.tab-task { width: 81px; background: #53a1ba; color: #fff; text-align: center; line-height: 26px; font-size: 13px; }
.tab { width: 26px; margin-left: 26px; line-height: 26px; white-space: nowrap; color: #222; }
.tab-active { width: 52px; margin-left: 2px; margin-top: 2px; background: #fff; color: #00789a; text-align: center; line-height: 24px; }
.tab-first { margin-left: 13px; }
.tabs-right { margin-left: auto; display: flex; align-items: center; padding-right: 10px; }
.speed { width: 103px; height: 24px; display: flex; border: 1px solid #4a90f0; border-radius: 4px; overflow: hidden; background: linear-gradient(90deg, #b9d8fb 0, #b9d8fb 36%, #dbeafe 36%); }
.speed-logo { width: 30px; background: #4a90f0; display: flex; align-items: center; justify-content: center; }
.speed-text { font: 12px/22px "Liberation Sans", sans-serif; color: #7ea6e8; padding-left: 4px; white-space: nowrap; letter-spacing: .4px; display: flex; align-items: center; gap: 3px; }
.search-btn { width: 20px; height: 20px; background: #fff; border: 1px solid #aaa; display: flex; align-items: center; justify-content: center; }
.tr-win { margin-left: 11px; }
.tr-chev { margin-left: 11px; }
.help { margin-left: 13px; width: 14px; height: 14px; border-radius: 50%; background: #3b6fc9; color: #fff; font: bold 11px/14px "Liberation Sans", sans-serif; text-align: center; }

/* ribbon */
.ribbon { height: 94px; flex: none; display: flex; border-bottom: 1px solid #d9d9d9; background: #fff; }
.group { display: flex; flex-direction: column; height: 93px; position: relative; }
.group-body { height: 76px; display: flex; align-items: flex-start; }
.group-foot { height: 17px; display: flex; align-items: center; color: #007a9e; font-size: 11.500px; line-height: 17px; }
.group-foot .caret { margin-left: auto; }
.group-sketch { width: 341px; }
.group-curve { width: 733px; }
.group-constraint { width: 248px; }
.group-rest { flex: 1; }
.group-sketch::after, .group-curve::after, .group-constraint::after { content: ""; position: absolute; right: 0; top: 5px; height: 84px; width: 1px; background: #d9d9d9; }
.foot-sketch { padding: 0 7px 0 151px; }
.foot-curve { padding: 0 7px 0 347px; }
.foot-constraint { padding: 0 8px 0 104px; }
.foot-rest { padding: 0 5px; }

.tool { display: flex; flex-direction: column; align-items: center; padding-top: 5px; flex: none; }
.tool-icon { height: 36px; display: flex; align-items: flex-start; justify-content: center; width: 100%; }
.icon-end { align-items: flex-end; padding-bottom: 6px; }
.tool-label { line-height: 16px; font-size: 11px; white-space: nowrap; }
.tool .caret { margin-top: 3px; }
.label-off { color: #bcbcbc; }
.tool-finish { width: 54px; padding-left: 4px; }
.tool-eval { width: 44px; }
.tool-update { margin-left: 8px; }
.sketch-stack { width: 180px; padding-top: 6px; display: flex; flex-direction: column; }
.sketch-top { display: flex; align-items: flex-start; gap: 9px; }
.sketch-top .mini-row { margin-top: -1px; }
.mini-row { display: flex; align-items: center; gap: 4px; white-space: nowrap; line-height: 14px; font-size: 11px; }
.mini-orient { margin-top: 6px; padding-left: 1px; gap: 3px; }
.mini-reattach { margin-top: 6px; padding-left: 1px; gap: 3px; }
.combo { display: flex; align-items: center; justify-content: space-between; border: 1px solid #aaa; background: #fff; padding: 0 8px 0 3px; height: 20px; flex: none; white-space: nowrap; }
.combo-sketch { width: 98px; font: 11px "Liberation Sans", sans-serif; }
.combo-filter { width: 132px; font-size: 12px; margin-left: 10px; }
.combo-scope { width: 139px; font-size: 12px; margin-left: 9px; }

.group-curve .group-body { padding-left: 9px; }
.tool-40 { width: 40px; }
.tool-40 .tool-icon { padding-top: 3px; }
.tool-arc { margin-left: 3px; }
.line-ico path, .line-ico .hollow { fill: none; stroke: #444; stroke-width: 1.300; }
.line-ico circle { fill: #d4372c; }
.gallery { margin-top: 5px; height: 65px; border: 1px solid #dcdcdc; display: grid; grid-auto-rows: 22px; align-items: center; align-content: center; padding: 0 0 2px 2px; flex: none; }
.gallery-curve { width: 185px; margin-left: 10px; grid-template-columns: 93px 90px; }
.gallery-corner { width: 126px; margin-left: 9px; grid-template-columns: 1fr; }
.g-item { display: flex; align-items: center; gap: 5px; white-space: nowrap; line-height: 21px; }
.g-item svg { width: 15px; }
.g-arrows { width: 18px; margin-top: 5px; height: 65px; display: grid; grid-auto-rows: 22px; align-content: center; align-items: center; justify-items: center; flex: none; }
.tool-52 { width: 52px; }
.tool-trim { margin-left: 7px; }
.group-constraint .group-body { padding-left: 9px; }
.tool-50 { width: 50px; }
.tool-geo { margin-left: 3px; }
.tool-geo2 { margin-left: 2px; }
.tool-show { width: 73px; margin-left: 2px; padding-top: 2px; }
.icon-on { height: 39px; background: #cde5ea; border: 1px solid #abd3df; padding-top: 3px; align-items: flex-start; }

/* selection bar */
.selbar { height: 31px; flex: none; display: flex; align-items: center; padding: 2px 0 0 10px; border-bottom: 2px solid #a9a9a9; background: #fff; position: relative; }
.menu-text { font-size: 12px; margin-left: 4px; width: 42px; white-space: nowrap; }
.menu-caret { margin-left: 2px; }
.sel-sep { margin-left: 6px; }
.sel-icons { margin-left: 11px; display: grid; align-items: center; justify-items: start;
  grid-template-columns: 25px 22px 21px 15px 25px 22px 15px 25px 22px 25px 24px 30px 20px 26px 28px 22px 28px 22px 24px 29px 26px 25px 13px 25px 24px 27px 23px 27px 21px 15px 22px 16px 22px 13px 23px 17px 2px; }
.hl { width: 23px; height: 22px; background: #cde5ea; border: 1px solid #abd3df; display: flex; align-items: center; justify-content: center; }
.sel-icons .hl { font-weight: normal; }
.sel-end { margin-left: auto; margin-right: 5px; }

/* main */
.main { flex: 1; min-height: 0; display: flex; }
.strip { width: 33px; flex: none; background: #dcdcdc; border-right: 1px solid #999; display: grid; padding-top: 6px; justify-items: center;
  grid-template-rows: 47px 41px 31px 45px 61px 55px 55px 42px 1fr; align-items: start; }
.strip-active { width: 32px; height: 45px; background: #fff; border: 1px solid #aaa; border-right: 0; margin-left: 2px; display: flex; align-items: center; justify-content: center; position: relative; left: 1px; z-index: 1; }
.strip-lib { margin-top: 9px; }
.nav { width: 197px; flex: none; background: #fff; border-right: 1px solid #999; display: flex; flex-direction: column; padding: 0 9px 0 5px; }
.nav-head { height: 29px; flex: none; display: flex; align-items: center; justify-content: space-between; font-size: 12px; padding: 0 7px 0 4px; }
.tree { height: 547px; flex: none; border: 1px solid #ddd; padding: 1px; display: flex; flex-direction: column; }
.tree-head { height: 20px; flex: none; display: flex; align-items: center; background: #f0f0f0; border-bottom: 1px solid #ddd; padding-left: 6px; font-size: 12px; gap: 18px; }
.tree-body { flex: 1; min-height: 0; display: flex; flex-direction: column; position: relative; overflow: hidden; }
.tree-lines { position: absolute; left: 0; top: 0; }
.row { height: 20px; flex: none; display: flex; align-items: center; font-size: 12px; border-bottom: 1px solid #e9e9e9; padding-left: 5px; white-space: nowrap; position: relative; }
.alt { background: #f9f9f9; }
.twist { width: 9px; height: 9px; border: 1px solid #ccc; background: #fff; font: bold 9px/7px "Liberation Sans", sans-serif; text-align: center; color: #111; margin-right: 4px; flex: none; }
.ri { margin-right: 4px; }
.rc { margin: 0 2px 0 3px; }
.row-child { padding-left: 40px; }
.cb { margin-right: 3px; }
.row-child span { font-weight: 400; }
.row-bold span { font-weight: 700; }
.tree-fill { flex: 1; background: repeating-linear-gradient(#f9f9f9 0 19px, #e9e9e9 19px 20px, #fff 20px 39px, #e9e9e9 39px 40px); }
.hscroll { height: 15px; flex: none; background: #efefef; display: flex; align-items: center; padding: 0 4px; justify-content: space-between; }
.thumb { width: 64px; height: 15px; background: #c8c8c8; margin: 0 auto 0 5px; }
.grip { height: 5px; flex: none; margin-top: 1px; border: 1px solid #aaa; background: #ddd; }
.sect { height: 24px; flex: none; display: flex; align-items: center; justify-content: space-between; font-size: 14px; color: #1b84a6; border-bottom: 2px solid #cfcfcf; padding: 0 5px 3px 7px; }

/* canvas */
.view { flex: 1; min-width: 0; display: flex; flex-direction: column; }
.doc-tabs { height: 24px; flex: none; border-bottom: 2px solid #5aa5bf; background: #fff; padding-top: 2px; }
.doc-tab { width: 110px; height: 20px; background: #5aa5bf; color: #fff; display: flex; align-items: center; padding-left: 7px; font: 12px "Liberation Sans", sans-serif; gap: 6px; }
.doc-tab span { width: 47px; white-space: nowrap; }
.canvas { flex: 1; min-height: 0; background: #d3d4d6; overflow: hidden; }
.sketch text { text-anchor: middle; font-family: Roboto, "Liberation Sans", sans-serif; }

.ext path { fill: none; stroke: #6e95d8; stroke-width: 1.500; }
.ext .ext-thick { stroke: #5a84d2; stroke-width: 2; }
.ref-black { fill: none; stroke: #000; stroke-width: 1.300; }
.dimline path { fill: none; stroke: #3f71d6; stroke-width: 1.100; }
.dimline .thin-dark { stroke: #1515d8; }
.dimline .hollow { stroke-width: 1; }
.dimfade path { fill: none; stroke: #7ea3dc; stroke-width: 1.300; }
.faded-bar { fill: none; stroke: #7ea3cf; stroke-width: 3; opacity: .8; }
.csys-square { fill: #a6bcd0; stroke: #18a4ff; stroke-width: 2; }
.axis-blue { stroke: #4a66e0; stroke-width: 2; fill: none; }
.axis-blue-head { fill: #0a0ae6; }
.axis-green { stroke: #2e8a2e; stroke-width: 4; fill: none; }
.axis-green-head { fill: #2e8a2e; }
.axis-red { stroke: #d93a36; stroke-width: 3; fill: none; }
.axis-red-head { fill: #d9352f; }
.axis-mini { stroke: #2f6a70; stroke-width: 1.500; fill: none; }
.axis-green-mini { stroke: #1fae3a; stroke-width: 2; fill: none; }
.x-blue { stroke: #2a4fd8; fill: none; }
.axis-label { font-size: 13px; font-weight: 400; }
.lab-blue { fill: #2020e0; }
.sketch .lab-green { fill: #35a035; font-size: 11px; }
.lab-red { fill: #d9352f; }
.curve path, .curve circle { fill: none; stroke: #0000e6; stroke-width: 2.200; }
.curve-dotted { fill: none; stroke: #3b5fd6; stroke-width: 1; stroke-dasharray: 2 2; }
.bars path { fill: none; stroke: #2a50d8; stroke-width: 4; }
.parallel path { fill: none; stroke: #2c55c8; stroke-width: 1.500; }
.ticks path { fill: none; stroke: #3460d6; stroke-width: 1.300; }
.points circle { fill: #0000ee; }
.rings circle { fill: none; stroke: #6a8cd8; stroke-width: 1.200; }
.cross-orange { fill: none; stroke: #b06a2a; stroke-width: 2; }
.dim-txt text { font-size: 23px; fill: #4474d6; font-weight: 300; }
.dim-txt.faded text { fill: #7099d8; }
.dim-txt .phi { font-size: 23px; }
.tc-square { fill: #cfcfcf; stroke: #a8a8a8; stroke-width: 1.500; }
.tc-y { stroke: #6d9b6d; fill: none; }
.tc-yh { fill: #1f8a1f; }
.tc-x { stroke: #c89a9a; fill: none; }
.tc-xh { fill: #d82c2c; }
.tc-z { fill: #1111d8; }
.sketch .tc-lab-y { font-size: 11px; fill: #49a049; }
.sketch .tc-lab-x { font-size: 11px; fill: #d85a5a; }

/* status */
.status { height: 22px; flex: none; display: flex; align-items: center; border-top: 1px solid #999; background: #fff; padding: 0 0 3px 3px; font-size: 11px; font-weight: 500; white-space: nowrap; letter-spacing: .12px; }
.status-l { width: 743px; }
.status-c { width: 764px; }
.status-win { margin-left: 5px; }
.taskbar { height: 8px; flex: none; background: #0e0e10; display: flex; position: relative; overflow: hidden; }
.tb-a { width: 48px; margin-left: 196px; background: #444; }
.tb-b { width: 17px; margin-left: 152px; background: #6b6420; }
.tb-c { width: 23px; background: #333; }
.tb-time { margin-left: auto; margin-right: 79px; color: #ddd; font: 11px/10px "Liberation Sans", sans-serif; padding-top: 5px; }

/* overlays */
.badge { position: absolute; left: 1582px; top: 259px; width: 44px; height: 44px; border-radius: 50%; background: radial-gradient(circle at 50% 30%, #58d36e, #3db453); border: 2px solid #eee; box-shadow: 0 2px 5px rgba(0,0,0,.35), 0 0 0 1px #999; padding-left: 4px; }
.badge span { font: bold 12px/40px "Liberation Serif", serif; color: #fff; }
.ime { position: absolute; left: 1395px; top: 770px; width: 205px; height: 27px; display: flex; align-items: center; z-index: 3; }
.ime-s { position: relative; z-index: 1; }
.ime-bar { margin-left: -8px; flex: 1; height: 22px; background: #fff; border-top: 2px solid #9a9a9a; border-bottom: 1px solid #bbb; display: flex; align-items: center; gap: 6.500px; padding-left: 12px; color: #1f78c8; }
.ime-zh { font-size: 15px; line-height: 18px; width: 16px; }
.ime-pt { font: bold 14px/16px "Liberation Sans", sans-serif; width: 16px; }
.watermark { position: absolute; left: 1317px; top: 773px; display: flex; gap: 8px; z-index: 2; pointer-events: none; }
.wm-text { display: flex; flex-direction: column; padding-top: 21px; white-space: nowrap; }
.wm-big { font: bold 40px/36px "Liberation Sans", "Noto Sans CJK SC", sans-serif; color: rgba(255,255,255,.42); letter-spacing: 2px; }
.wm-small { font: 18px/20px "Liberation Sans", sans-serif; color: rgba(255,255,255,.42); letter-spacing: 2px; margin-top: 1px; }
```
